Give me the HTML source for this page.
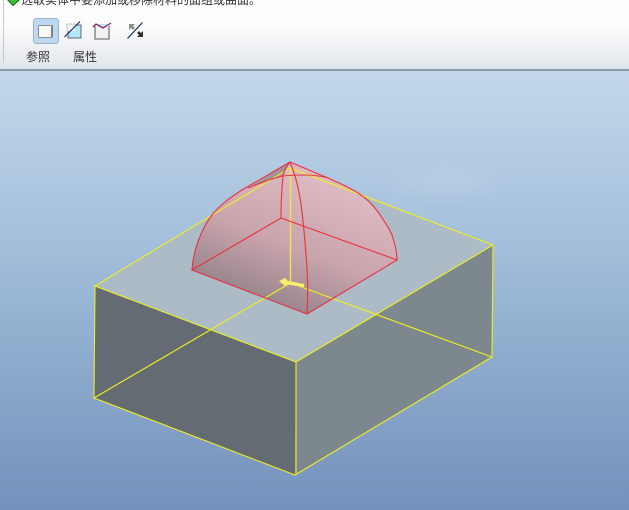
<!DOCTYPE html>
<html><head><meta charset="utf-8"><style>
html,body{margin:0;padding:0;width:629px;height:510px;overflow:hidden;background:#fff}
#bar{position:absolute;left:0;top:0;width:629px;height:66px;background:linear-gradient(#ffffff 0,#fbfcfc 25px,#e3e8eb 66px);overflow:hidden}
.t{position:absolute;font-family:"Liberation Sans","Noto Sans CJK SC",sans-serif;color:#333;white-space:nowrap}
#main{position:absolute;left:0;top:71px;width:629px;height:439px;background:linear-gradient(#c3d8ea 0,#a3bfdb 170px,#7391bb 439px)}
svg{position:absolute;left:0;top:0}
</style></head><body>
<div id="bar">
<div class="t" style="left:21px;top:-8px;font-size:12px;line-height:16px;color:#333">选取实体中要添加或移除材料的面组或曲面。</div>
<div class="t" style="left:26px;top:50px;font-size:12px;line-height:15px">参照</div>
<div class="t" style="left:73px;top:50px;font-size:12px;line-height:15px">属性</div>
</div>
<div style="position:absolute;left:0;top:66px;width:629px;height:4px;background:#d9e6ee"></div>
<div style="position:absolute;left:0;top:69px;width:629px;height:2px;background:#8c9aa3"></div>
<div id="main"></div>
<svg width="629" height="510" viewBox="0 0 629 510">
<defs>
<linearGradient id="dome" gradientUnits="userSpaceOnUse" x1="335" y1="190" x2="285" y2="318"><stop offset="0" stop-color="#dcb8c0"/><stop offset="0.5" stop-color="#c9a4ac"/><stop offset="0.78" stop-color="#ab9198"/><stop offset="1" stop-color="#90828a"/></linearGradient>
<radialGradient id="cloud"><stop offset="0" stop-color="#d3e2ef" stop-opacity=".22"/><stop offset="1" stop-color="#d3e2ef" stop-opacity="0"/></radialGradient>
</defs>
<ellipse cx="445" cy="180" rx="70" ry="26" fill="url(#cloud)"/>
<!-- toolbar -->
<line x1="3.500" y1="0" x2="3.500" y2="63" stroke="#c3c9cd"/>
<path d="M7 0H20L13 6Z" fill="#3fbf2f"/>
<path d="M8 0 13 5.500 19 0" fill="none" stroke="#1d6a1d" stroke-width="1"/>
<rect x="33.500" y="18.500" width="25" height="25" rx="3" fill="#bcd9f1" stroke="#9fb2c4"/>
<rect x="38.500" y="25.500" width="13" height="12" rx="1" fill="#f8f8f4" stroke="#8a8f8f"/>
<path d="M51 26l2-1v12l-2 1z" fill="#7a8288"/>
<rect x="68" y="25" width="13" height="13" fill="#b4e6f4" stroke="#667"/>
<rect x="67" y="24" width="8" height="7" fill="#f4f6f6"/>
<path d="M67 24h7M67 24v7" stroke="#999" stroke-dasharray="1 1" fill="none"/>
<line x1="64.500" y1="37" x2="80" y2="21.500" stroke="#1a2f6f" stroke-width="1.200"/>
<path d="M95 26v13h14V26" fill="#f1f2f2" stroke="#8f8f8f" stroke-width="1.600"/>
<path d="M97 24h11l-5 4z" fill="#b5e6f2"/>
<path d="M93 27l3-3 7 4 8-5" fill="none" stroke="#8c1f62" stroke-width="1.300"/>
<line x1="127.500" y1="38.500" x2="142.500" y2="22.500" stroke="#1a2a66" stroke-width="1.200"/>
<path d="M129 24h6l-2 2 2 2-2 2-2-2-2 2z" fill="#8d8d8d"/>
<path d="M143 37h-6l2-2-2-2 2-2 2 2 2-2z" fill="#333"/>
<!-- box faces -->
<polygon points="95,286 290,168 493,245 296,362" fill="#acbbc5"/>
<polygon points="95,286 296,362 295,475 94,398" fill="#646b72"/>
<polygon points="296,362 493,245 492,357 295,475" fill="#7c888d"/>
<!-- dome fill -->
<path d="M192 270C193 250 202 228 212 215C221 204 231 197 242 190L290 162L328 178C339 183 349 187 358 193C366 198 373 205 378 212C385 222 390 230 392 235C395 244 397 252 397 260L307 314Z" fill="url(#dome)"/>
<path d="M248 188 290 162 283 176Z" fill="#a4929a"/>
<!-- yellow lines -->
<g fill="none" stroke="#eeee24" stroke-width="1.100">
<path d="M95 286 290 168 493 245 296 362Z"/>
<path d="M95 286 94 398 295 475 492 357 493 245"/>
<path d="M296 362V475"/>
<path d="M94 398 290.500 283M492 357 290.500 283"/>
<path d="M290.500 168V283" stroke="#f6e24a" stroke-width="1.400"/>
</g>
<!-- dome lines -->
<g fill="none" stroke="#e8323f" stroke-width="1.100">
<path d="M192 270 281 218 397 260 307 314Z"/>
<path d="M192 270C193 250 202 228 212 215C221 204 231 197 242 190L290 162L328 178C339 183 349 187 358 193C366 198 373 205 378 212C385 222 390 230 392 235C395 244 397 252 397 260"/>
<path d="M307 314C308 295 308 285 307 268C305 240 303 215 300 198C298 185 294 172 290 162"/>
<path d="M281 218C281 200 282 186 283 176C284 170 287 166 290 162"/>
<path d="M248 188C262 182 273 178 283 176C290 175 298 175 305 175C313 175 321 176 328 178"/>
</g>
<!-- centre arrow -->
<path d="M279 281 285 278 288 281 304 284 304 287 287 284.500 285 286Z" fill="#f6f06a"/>
</svg>
</body></html>
